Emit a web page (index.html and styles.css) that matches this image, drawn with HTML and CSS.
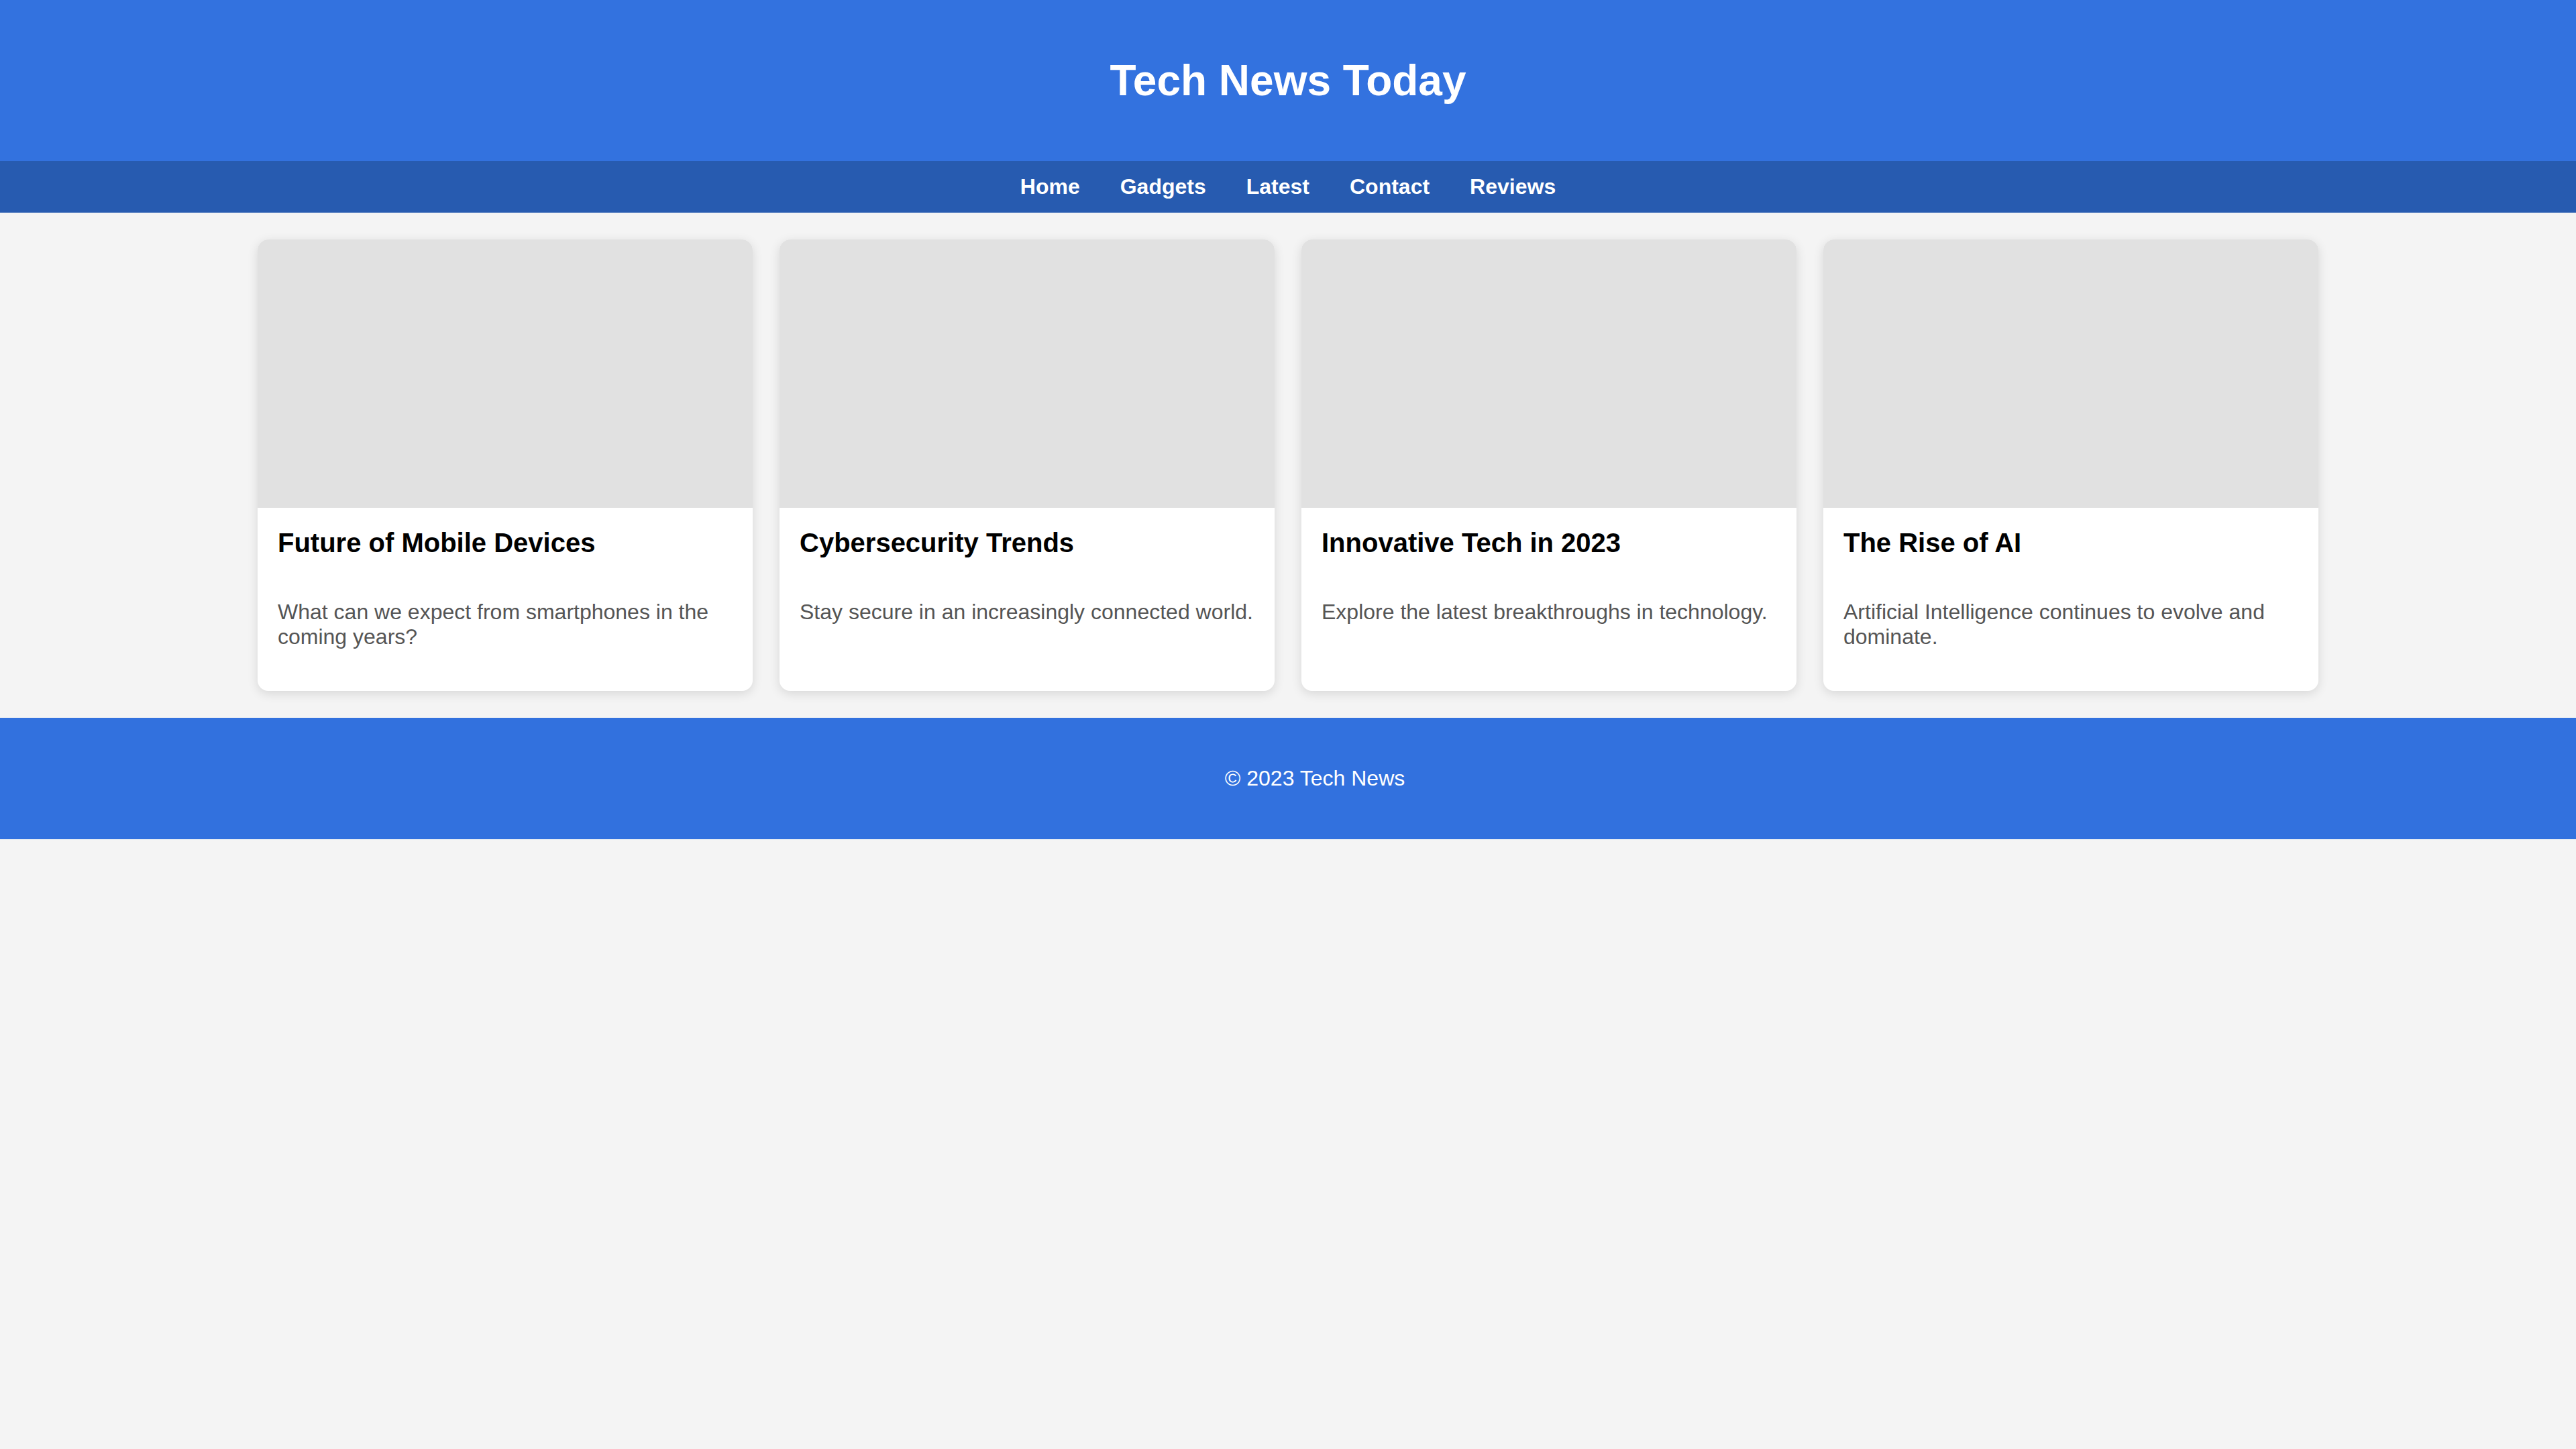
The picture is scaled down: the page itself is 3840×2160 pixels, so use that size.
FILE: index.html
```html
<!DOCTYPE html>
<html lang="en">
<head>
<meta charset="utf-8">
<title>Tech News Today</title>
<link rel="stylesheet" href="styles.css">
</head>
<body>
<header class="site-header">
  <h1 class="site-title">Tech News Today</h1>
</header>
<nav class="site-nav">
  <a href="#" class="nav-link">Home</a>
  <a href="#" class="nav-link">Gadgets</a>
  <a href="#" class="nav-link">Latest</a>
  <a href="#" class="nav-link">Contact</a>
  <a href="#" class="nav-link">Reviews</a>
</nav>
<main class="articles">
  <article class="card">
    <div class="card-image"></div>
    <div class="card-body">
      <h3 class="card-title">Future of Mobile Devices</h3>
      <p class="card-text">What can we expect from smartphones in the coming years?</p>
    </div>
  </article>
  <article class="card">
    <div class="card-image"></div>
    <div class="card-body">
      <h3 class="card-title">Cybersecurity Trends</h3>
      <p class="card-text">Stay secure in an increasingly connected world.</p>
    </div>
  </article>
  <article class="card">
    <div class="card-image"></div>
    <div class="card-body">
      <h3 class="card-title">Innovative Tech in 2023</h3>
      <p class="card-text">Explore the latest breakthroughs in technology.</p>
    </div>
  </article>
  <article class="card">
    <div class="card-image"></div>
    <div class="card-body">
      <h3 class="card-title">The Rise of AI</h3>
      <p class="card-text">Artificial Intelligence continues to evolve and dominate.</p>
    </div>
  </article>
</main>
<footer class="site-footer">
  <p class="footer-text">© 2023 Tech News</p>
</footer>
</body>
</html>
```
FILE: styles.css
```css
html, body {
  margin: 0;
  padding: 0;
}

body {
  font-family: "Liberation Sans", Arial, Helvetica, sans-serif;
  font-size: 32px;
  background: #f4f4f4;
  color: #000;
}

.site-header {
  background: #3372df;
  color: #fff;
  text-align: center;
  padding: 40px;
}

.site-title {
  font-size: 64px;
  font-weight: bold;
  margin: 0.67em 0;
}

.site-nav {
  background: #275bb0;
  padding: 20px;
  display: flex;
  justify-content: center;
  gap: 60px;
}

.nav-link {
  color: #fff;
  font-weight: bold;
  text-decoration: none;
}

.articles {
  width: 80%;
  margin: 0 auto;
  padding: 40px 0;
  display: grid;
  grid-template-columns: repeat(4, 1fr);
  gap: 40px;
}

.card {
  background: #fff;
  border-radius: 16px;
  overflow: hidden;
  box-shadow: 0 4px 16px rgba(0, 0, 0, 0.12);
  display: flex;
  flex-direction: column;
}

.card-image {
  height: 400px;
  background: #e1e1e1;
}

.card-body {
  padding: 30px;
  display: flex;
  flex-direction: column;
}

.card-title {
  font-size: 40px;
  font-weight: bold;
  margin: 0 0 30px;
  color: #000;
}

.card-text {
  margin: 32px 0;
  color: #555;
}

.site-footer {
  background: #3271de;
  color: #fff;
  text-align: center;
  padding: 40px 0 40px 80px;
}

.footer-text {
  margin: 32px 0;
}
```
